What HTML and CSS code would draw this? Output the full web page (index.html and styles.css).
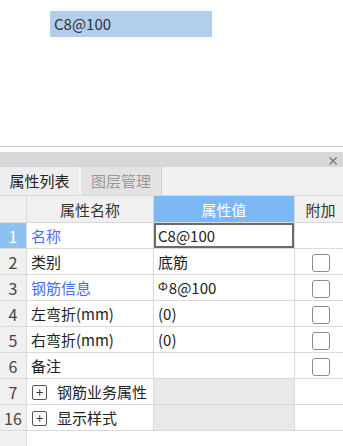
FILE: index.html
```html
<!DOCTYPE html>
<html lang="zh-CN">

<head>
  <meta charset="UTF-8">
  <meta name="viewport" content="width=device-width, initial-scale=1.0">
  <title>属性列表</title>
  <link rel="stylesheet" href="styles.css">
</head>

<body>
  <!-- 上方编辑区 -->
  <div class="canvas">
    <div class="edit-box">C8@100</div>
  </div>

  <!-- 属性面板 -->
  <div class="panel">
    <div class="panel-bar"><span class="close">×</span></div>
    <div class="tabs">
      <div class="tab active">属性列表</div>
      <div class="tab">图层管理</div>
    </div>
    <table class="props">
      <thead>
        <tr>
          <th class="idx"></th>
          <th class="name">属性名称</th>
          <th class="value hl">属性值</th>
          <th class="extra">附加</th>
        </tr>
      </thead>
      <tbody>
        <tr>
          <td class="idx sel">1</td>
          <td class="name link">名称</td>
          <td class="value editing">C8@100</td>
          <td class="extra"></td>
        </tr>
        <tr>
          <td class="idx">2</td>
          <td class="name">类别</td>
          <td class="value">底筋</td>
          <td class="extra"><span class="check"></span></td>
        </tr>
        <tr>
          <td class="idx">3</td>
          <td class="name link">钢筋信息</td>
          <td class="value"><span class="grade">Ф</span>8@100</td>
          <td class="extra"><span class="check"></span></td>
        </tr>
        <tr>
          <td class="idx">4</td>
          <td class="name">左弯折(mm)</td>
          <td class="value">(0)</td>
          <td class="extra"><span class="check"></span></td>
        </tr>
        <tr>
          <td class="idx">5</td>
          <td class="name">右弯折(mm)</td>
          <td class="value">(0)</td>
          <td class="extra"><span class="check"></span></td>
        </tr>
        <tr>
          <td class="idx">6</td>
          <td class="name">备注</td>
          <td class="value"></td>
          <td class="extra"><span class="check"></span></td>
        </tr>
        <tr class="group">
          <td class="idx">7</td>
          <td class="name"><span class="plus">+</span>钢筋业务属性</td>
          <td class="value"></td>
          <td class="extra"></td>
        </tr>
        <tr class="group">
          <td class="idx">16</td>
          <td class="name"><span class="plus">+</span>显示样式</td>
          <td class="value"></td>
          <td class="extra"></td>
        </tr>
        <tr class="filler">
          <td class="idx"></td>
          <td colspan="3"></td>
        </tr>
      </tbody>
    </table>
  </div>
</body>

</html>
```

FILE: styles.css
```css
body {
  margin: 0;
  width: 343px;
  height: 446px;
  overflow: hidden;
  font-family: "Noto Sans CJK SC", "Noto Sans", sans-serif;
  font-size: 15px;
  color: #222;
  background: #fff;
}

.canvas {
  height: 146px;
  padding-top: 11px;
  box-sizing: border-box;
}

.edit-box {
  margin-left: 50px;
  width: 158px;
  height: 26px;
  line-height: 26px;
  padding-left: 4px;
  background: #b3cdec;
  color: #333;
  font-size: 15px;
}

.panel {
  border-top: 1px solid #c9c9c9;
}

.panel-bar {
  margin-top: 5px;
  height: 15px;
  background: #d5d7db;
  text-align: right;
  padding-right: 4px;
  line-height: 15px;
}

.close {
  font-size: 12px;
  font-weight: bold;
  color: #777;
}

.tabs {
  display: flex;
  height: 28px;
  background: #f0f0f0;
}

.tab {
  width: 81px;
  line-height: 28px;
  text-align: center;
  font-size: 15px;
  color: #999;
  background: #e3e3e3;
  border-right: 1px solid #d0d0d0;
  box-sizing: border-box;
}

.tab.active {
  color: #222;
  background: #ededed;
  border-right: 2px solid #f6f6f6;
}

.props {
  width: 343px;
  border-collapse: collapse;
  table-layout: fixed;
}

.props th,
.props td {
  height: 25px;
  padding: 0;
  border: 1px solid #dadada;
  font-weight: normal;
  font-size: 15px;
  white-space: nowrap;
  overflow: hidden;
}

.props tr > :first-child {
  border-left: none;
}

.props tr > :last-child {
  border-right: none;
}

.props th {
  height: 26px;
  background: #f0f0f0;
  color: #333;
  text-align: center;
}

.props th.hl {
  background: #7ab7f4;
  color: #fff;
}

.props .idx {
  width: 26px;
  background: #f0f0f0;
  text-align: center;
  color: #444;
  font-size: 16px;
}

.props td.idx.sel {
  background: #8ec1f2;
  color: #fff;
}

.props .name {
  width: 126px;
}

.props .value {
  width: 140px;
}

.props .extra {
  width: 51px;
  text-align: center;
}

.props td.name,
.props td.value {
  padding-left: 4px;
}

.props td.link {
  color: #4a6ef0;
}

.props td.editing {
  box-shadow: inset 0 0 0 2px #6b6b6b;
}

.grade {
  font-size: 12px;
  margin-right: 1px;
  position: relative;
  top: -3px;
}

.check {
  display: inline-block;
  width: 16px;
  height: 16px;
  border: 1px solid #8a8a8a;
  border-radius: 3px;
  vertical-align: middle;
  background: #fff;
}

.group td.value {
  background: #e9e9e9;
}

.plus {
  display: inline-block;
  width: 13px;
  height: 13px;
  line-height: 12px;
  border: 1px solid #555;
  border-radius: 2px;
  text-align: center;
  font-size: 13px;
  color: #333;
  margin: 0 10px 0 1px;
  vertical-align: middle;
  position: relative;
  top: -1px;
}

.props tr.filler td {
  height: 30px;
  border: none;
  border-top: 1px solid #dadada;
}

.props tr.filler td.idx {
  border-right: 1px solid #dadada;
}
```
